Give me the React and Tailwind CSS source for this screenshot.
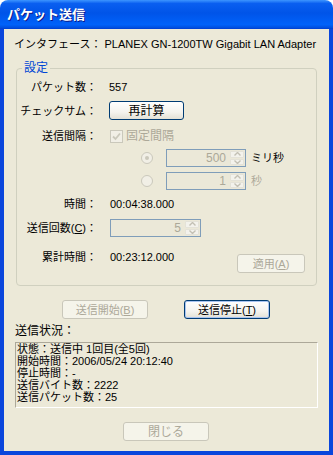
import React from 'react';

const FONT = "font-['Liberation_Sans','Noto_Sans_CJK_JP',sans-serif]";

function Button({ children, disabled, active, className = '' }) {
  return (
    <div
      className={`flex h-[19px] items-center justify-center rounded-[3px] border ${
        disabled
          ? 'border-[#C9C7BA] bg-[#F5F4EA] text-[#ACA899]'
          : 'border-[#003C74] bg-[linear-gradient(to_bottom,#FFFFFF_0%,#F4F3EE_60%,#E3E1D6_100%)] text-black'
      } ${active ? 'shadow-[inset_0_0_0_1px_#A9C4F0]' : ''} ${className}`}
    >
      {children}
    </div>
  );
}

function Chevron({ up }) {
  return (
    <svg width="7" height="4" viewBox="0 0 7 4">
      <path d={up ? 'M0.5 3.5 L3.5 0.5 L6.5 3.5' : 'M0.5 0.5 L3.5 3.5 L6.5 0.5'} fill="none" stroke="#C3C0B4" strokeWidth="1.4" />
    </svg>
  );
}

function Spin({ value, className = '' }) {
  return (
    <div className={`flex h-[18px] items-stretch border border-[#7F9DB9] bg-[#EBE8D8] ${className}`}>
      <span className="flex flex-1 items-center justify-end pr-[3px] text-[12px] text-[#ACA899]">{value}</span>
      <div className="flex w-[16px] flex-col gap-px p-px">
        <div className="flex flex-1 items-center justify-center rounded-[1px] border border-[#E4E2D8] bg-[#F3F2EC]">
          <Chevron up />
        </div>
        <div className="flex flex-1 items-center justify-center rounded-[1px] border border-[#E4E2D8] bg-[#F3F2EC]">
          <Chevron />
        </div>
      </div>
    </div>
  );
}

function Radio({ checked }) {
  return (
    <div className="flex h-[12px] w-[12px] items-center justify-center rounded-full border border-[#CAC8BB] bg-[#F1EFE6]">
      {checked && <div className="h-[4px] w-[4px] rounded-full bg-[#CAC8BB]" />}
    </div>
  );
}

function Label({ children }) {
  return <div className="w-[80px] shrink-0 whitespace-nowrap text-right">{children}</div>;
}

export default function App() {
  return (
    <div className={`flex h-[455px] w-[333px] flex-col text-[11px] leading-[14px] text-black ${FONT}`}>
      <div className="flex h-[29px] shrink-0 items-center rounded-t-[8px] bg-[linear-gradient(to_bottom,#3D95FF_0%,#0A5FF0_12%,#0054E8_45%,#0062FA_85%,#0050E0_95%,#003DD0_100%)] pl-[7px]">
        <span className="text-[13px] font-bold text-white [text-shadow:1px_1px_0_#0A1A8C]">パケット送信</span>
      </div>

      <div className="flex flex-1 flex-col border-x-[4px] border-b-[4px] border-[#0A46DC] bg-[#ECE9D8]">
        <div className="ml-[10px] mt-[8px] flex h-[14px] items-center whitespace-nowrap">
          インタフェース： PLANEX GN-1200TW Gigabit LAN Adapter
        </div>

        <fieldset className="mx-[12px] mt-[10px] flex flex-col rounded-[4px] border border-[#D0D0BF] pb-[12px]">
          <legend className="ml-[5px] px-[2px] text-[12px] leading-[14px] text-[#0046D5]">設定</legend>

          <div className="mt-[5px] flex h-[14px] items-center">
            <Label>パケット数：</Label>
            <span className="ml-[12px]">557</span>
          </div>

          <div className="mt-[7px] flex h-[19px] items-center">
            <Label>チェックサム：</Label>
            <Button className="ml-[12px] w-[75px] text-[12px]">再計算</Button>
          </div>

          <div className="mt-[9px] flex h-[14px] items-center">
            <Label>送信間隔：</Label>
            <div className="ml-[13px] flex h-[13px] w-[13px] items-center justify-center border border-[#CAC8BB] bg-[#F1EFE6]">
              <svg width="9" height="9" viewBox="0 0 9 9">
                <path d="M1 4.5 L3.5 7 L8 1.5" fill="none" stroke="#CAC8BB" strokeWidth="1.8" />
              </svg>
            </div>
            <span className="ml-[3px] text-[12px] text-[#ACA899]">固定間隔</span>
          </div>

          <div className="mt-[6px] flex h-[18px] items-center">
            <div className="w-[80px] shrink-0" />
            <div className="ml-[44px]">
              <Radio checked />
            </div>
            <Spin value="500" className="ml-[13px] w-[80px]" />
            <span className="ml-[5px]">ミリ秒</span>
          </div>

          <div className="mt-[5px] flex h-[18px] items-center">
            <div className="w-[80px] shrink-0" />
            <div className="ml-[44px]">
              <Radio />
            </div>
            <Spin value="1" className="ml-[13px] w-[80px]" />
            <span className="ml-[5px] text-[#ACA899]">秒</span>
          </div>

          <div className="mt-[7px] flex h-[14px] items-center">
            <Label>時間：</Label>
            <span className="ml-[13px]">00:04:38.000</span>
          </div>

          <div className="mt-[8px] flex h-[18px] items-center">
            <Label>
              送信回数(<u>C</u>)：
            </Label>
            <Spin value="5" className="ml-[13px] w-[91px]" />
          </div>

          <div className="mt-[13px] flex items-start">
            <div className="flex h-[14px] items-center">
              <Label>累計時間：</Label>
              <span className="ml-[13px]">00:23:12.000</span>
            </div>
            <Button disabled className="ml-auto mr-[11px] mt-[4px] w-[68px]">
              適用(<u>A</u>)
            </Button>
          </div>
        </fieldset>

        <div className="ml-[58px] mt-[14px] flex gap-[36px]">
          <Button disabled className="w-[86px]">
            送信開始(<u>B</u>)
          </Button>
          <Button active className="w-[86px]">
            送信停止(<u>T</u>)
          </Button>
        </div>

        <div className="ml-[11px] mt-[6px] flex h-[12px] items-center text-[12px]">送信状況：</div>

        <div className="ml-[11px] mt-[5px] flex h-[66px] w-[303px] flex-col border border-b-white border-l-[#ACA899] border-r-white border-t-[#ACA899] pl-[1px] leading-[12px]">
          <div className="h-[12px]">状態：送信中 1回目(全5回)</div>
          <div className="h-[12px]">開始時間：2006/05/24 20:12:40</div>
          <div className="h-[12px]">停止時間：-</div>
          <div className="h-[12px]">送信バイト数：2222</div>
          <div className="h-[12px]">送信パケット数：25</div>
        </div>

        <Button disabled className="ml-[119px] mt-[14px] w-[86px] text-[12px]">
          閉じる
        </Button>
      </div>
    </div>
  );
}
